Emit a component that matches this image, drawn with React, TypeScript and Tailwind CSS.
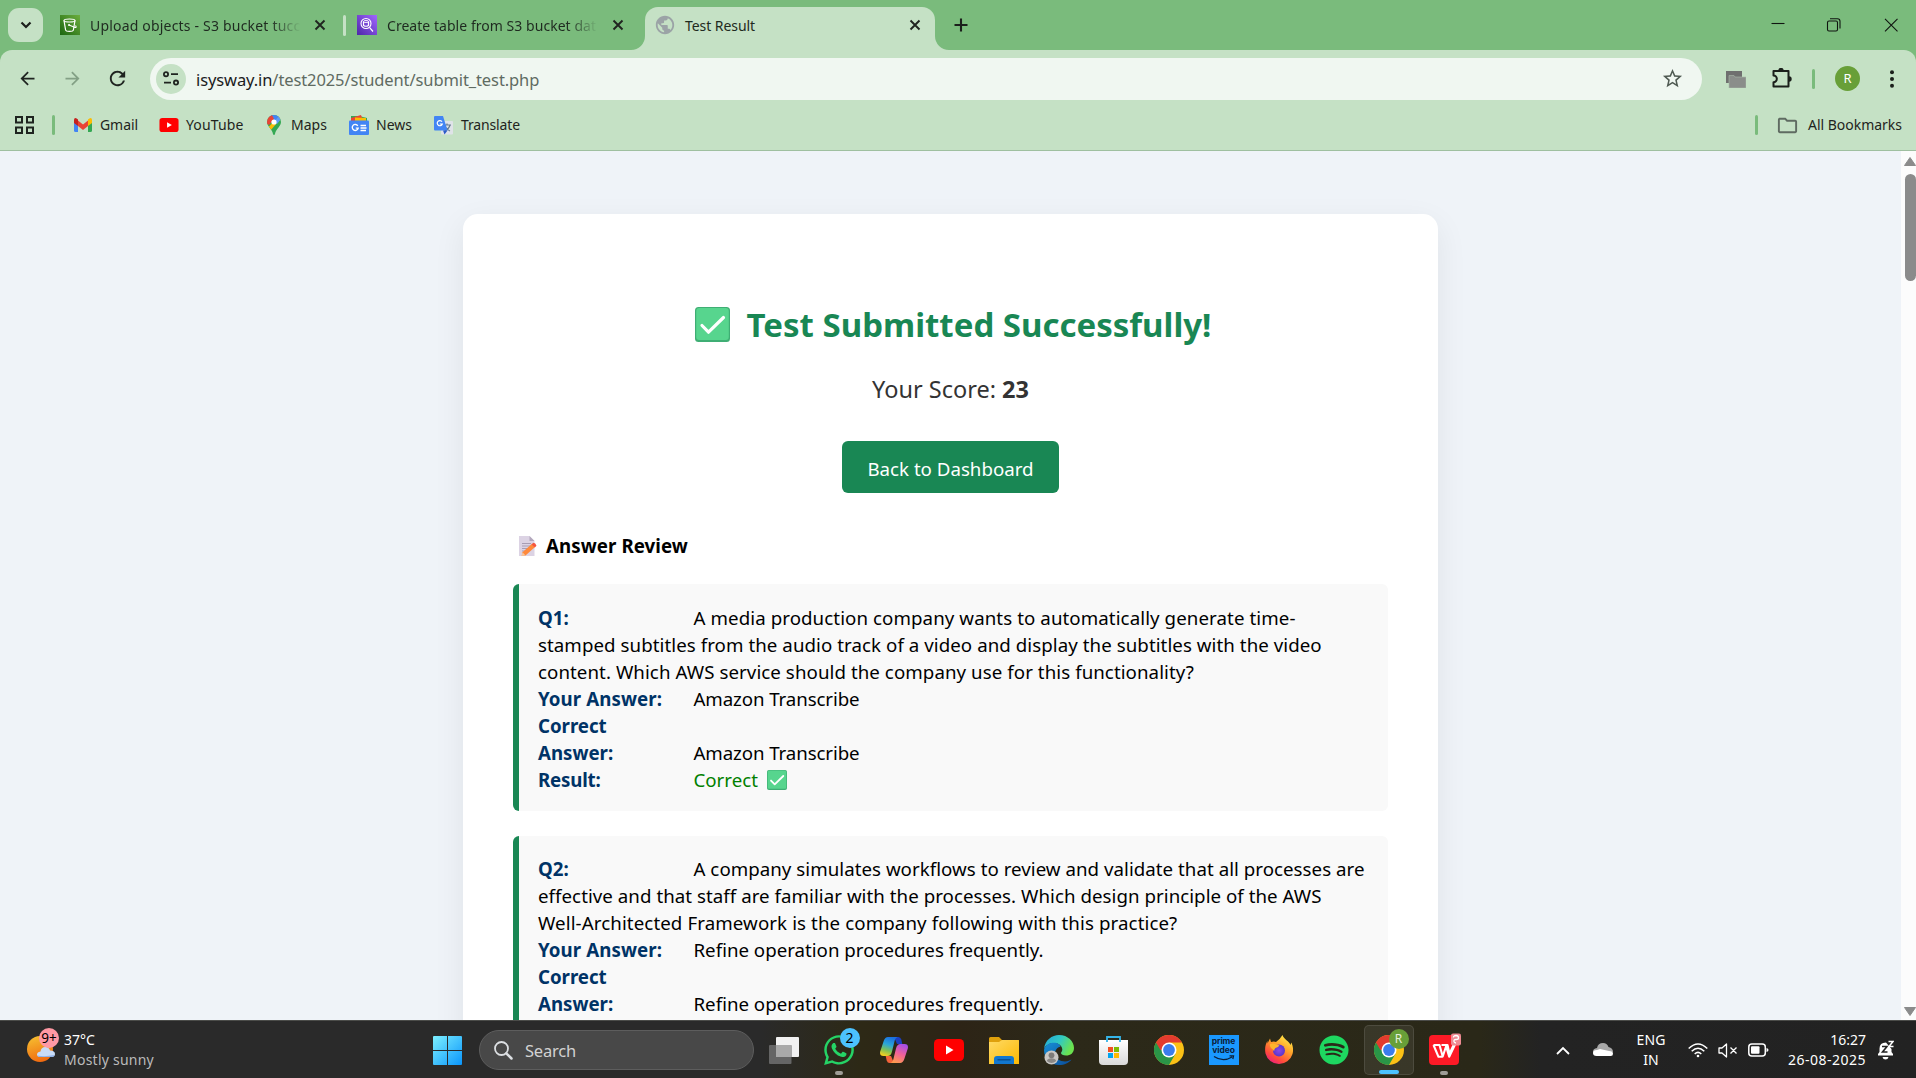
import type { ReactNode } from "react";
import { FaSpotify, FaWhatsapp } from "react-icons/fa";
import { MdArrowBack, MdArrowForward, MdOutlineFolder, MdPublic, MdRefresh, MdStarBorder } from "react-icons/md";

type Line = { text: string; spacing: string };
type Question = { id: string; pad: string; first: Line; rest: Line[]; answer: Line };

const questions: Question[] = [
  {
    id: "Q1:",
    pad: "pt-[20px]",
    first: { text: "A media production company wants to automatically generate time-", spacing: "tracking-[0.085px]" },
    rest: [
      { text: "stamped subtitles from the audio track of a video and display the subtitles with the video", spacing: "tracking-[0.064px]" },
      { text: "content. Which AWS service should the company use for this functionality?", spacing: "tracking-[0.07px]" },
    ],
    answer: { text: "Amazon Transcribe", spacing: "tracking-[-0.1px]" },
  },
  {
    id: "Q2:",
    pad: "pt-[19px]",
    first: { text: "A company simulates workflows to review and validate that all processes are", spacing: "tracking-[0.037px]" },
    rest: [
      { text: "effective and that staff are familiar with the processes. Which design principle of the AWS", spacing: "tracking-[0.045px]" },
      { text: "Well-Architected Framework is the company following with this practice?", spacing: "tracking-[0.1px]" },
    ],
    answer: { text: "Refine operation procedures frequently.", spacing: "" },
  },
];

function CheckEmoji({ className }: { className: string }) {
  return (
    <svg viewBox="0 0 35 35" className={className}>
      <rect x="0" y="0" width="35" height="35" rx="3.5" fill="#3fae74" />
      <rect x="1.2" y="1" width="32.6" height="32" rx="3" fill="#57d58e" />
      <path d="M7 18.5 13.5 25.2 28.5 10.5" fill="none" stroke="#fff" strokeWidth="3.2" strokeLinecap="round" strokeLinejoin="round" />
    </svg>
  );
}

function MemoEmoji() {
  return (
    <svg viewBox="0 0 18 20" className="h-5 w-[18px] shrink-0">
      <path d="M0 0h10.500l5 5v15H0z" fill="#dcd3e4" />
      <path d="M10.500 0l5 5h-5z" fill="#b3a8bd" />
      <path d="M3 7.500h9M3 10h9M3 12.500h6M3 15h4" stroke="#a89db4" strokeWidth="1" />
      <path d="M3.500 16.200 13 7.800l3 3.200-9.500 8.500-3.800.5z" fill="#ff8a3c" />
      <path d="M12.500 8.300 14.500 6.800q2 .2 3 3L15.800 11.500z" fill="#f5553f" />
      <path d="M3.500 16.200 6.500 19.500 2.700 20z" fill="#f7c9a0" />
    </svg>
  );
}

function CloseIcon() {
  return (
    <svg viewBox="0 0 12 12" className="size-3 shrink-0">
      <path d="M1.500 1.500l9 9M10.500 1.500l-9 9" stroke="#202420" strokeWidth="1.9" />
    </svg>
  );
}

function S3Icon() {
  return (
    <svg viewBox="0 0 20 20" className="size-5 shrink-0">
      <defs><linearGradient id="s3" x1="0" y1="1" x2="1" y2="0"><stop stopColor="#1b660f" /><stop offset="1" stopColor="#6cae3e" /></linearGradient></defs>
      <rect width="20" height="20" fill="url(#s3)" />
      <path d="M4 5.500 5.600 15c.3 1.800 7.500 1.800 7.800 0L15 5.500" fill="none" stroke="#fff" strokeWidth="1.200" />
      <ellipse cx="9.500" cy="5.500" rx="5.500" ry="1.500" fill="none" stroke="#fff" strokeWidth="1.200" />
      <path d="M9 10l6 2.500q2 0 .5-2" fill="none" stroke="#fff" strokeWidth="1.100" />
      <circle cx="9" cy="10" r="1" fill="#fff" />
    </svg>
  );
}

function AthenaIcon() {
  return (
    <svg viewBox="0 0 20 20" className="size-5 shrink-0">
      <defs><linearGradient id="athena" x1="0" y1="1" x2="1" y2="0"><stop stopColor="#4d27a8" /><stop offset="1" stopColor="#a166ff" /></linearGradient></defs>
      <rect width="20" height="20" fill="url(#athena)" />
      <circle cx="9" cy="8.500" r="5" fill="none" stroke="#fff" strokeWidth="1.100" />
      <ellipse cx="9" cy="6.500" rx="2.500" ry="1" fill="none" stroke="#fff" strokeWidth=".9" />
      <path d="M6.500 6.500v4q2.500 1.500 5 0v-4M12.500 12.300l3.500 4.200" fill="none" stroke="#fff" strokeWidth="1.200" />
    </svg>
  );
}

function TabStrip() {
  return (
    <div className="flex h-[50px] items-center pl-2 text-[14px] leading-5 text-[#1f2a20]">
      <div className="flex h-[34px] w-[35px] items-center justify-center rounded-[11px] bg-[#c5e1c5]">
        <svg viewBox="0 0 12 8" className="h-[8px] w-[12px]"><path d="M1.500 1.500 6 6l4.500-4.500" fill="none" stroke="#1b1f1b" strokeWidth="2.200" /></svg>
      </div>
      <div className="ml-[17px] flex w-[283px] items-center">
        <S3Icon />
        <div className="ml-[10px] w-[211px] overflow-hidden pt-px whitespace-nowrap tracking-[0.19px] [mask-image:linear-gradient(to_right,black_85%,transparent)]">Upload objects - S3 bucket tucc</div>
        <div className="ml-[13px]"><CloseIcon /></div>
      </div>
      <div className="h-[21px] w-[3px] rounded-full bg-[#c5e1c5]" />
      <div className="ml-[11px] flex w-[288px] items-center">
        <AthenaIcon />
        <div className="ml-[10px] w-[211px] overflow-hidden pt-px whitespace-nowrap tracking-[0.04px] [mask-image:linear-gradient(to_right,black_85%,transparent)]">Create table from S3 bucket dat</div>
        <div className="ml-[14px]"><CloseIcon /></div>
      </div>
      <div className="relative mt-[7px] flex h-[43px] w-[290px] items-center rounded-t-[13px] bg-[#c5e1c5] pb-[7px] pl-[11px]">
        <svg viewBox="0 0 14 14" className="absolute bottom-0 -left-[14px] size-[14px]"><path d="M14 0v14H0A14 14 0 0 0 14 0z" fill="#c5e1c5" /></svg>
        <svg viewBox="0 0 14 14" className="absolute -right-[14px] bottom-0 size-[14px]"><path d="M0 0v14h14A14 14 0 0 1 0 0z" fill="#c5e1c5" /></svg>
        <MdPublic className="-ml-0.5 size-[22px] text-[#9ba3a6]" />
        <div className="ml-[9px] w-[224px] pt-px tracking-[-0.066px]">Test Result</div>
        <CloseIcon />
      </div>
      <svg viewBox="0 0 14 14" className="ml-[19px] size-[14px]"><path d="M7 .5v13M.5 7h13" stroke="#1b1f1b" strokeWidth="2.100" /></svg>
      <svg viewBox="0 0 128 14" className="mr-[17px] ml-auto h-[14px] w-[128px]">
        <g fill="none" stroke="#101510" strokeWidth="1.100">
          <path d="M.5 5.500h13" />
          <rect x="56.500" y="3" width="10" height="10" rx="1.500" />
          <path d="M59 .8h7.500q2.500 0 2.500 2.500V10.500" />
          <path d="M114 .8l12.500 12.500M126.500.8 114 13.300" />
        </g>
      </svg>
    </div>
  );
}

function Toolbar() {
  return (
    <div className="flex h-[50px] items-center rounded-t-[12px] bg-[#c5e1c5] pt-[7px] pl-[17px] text-[#1f2420]">
      <MdArrowBack className="size-[21px]" />
      <MdArrowForward className="ml-[24px] size-[21px] text-[#83a085]" />
      <MdRefresh className="ml-[23px] size-[23px]" />
      <div className="ml-[21px] flex h-[42px] w-[1552px] items-center rounded-full bg-[#f0f7f1] pl-[6px]">
        <div className="flex size-[30px] items-center justify-center rounded-full bg-[#c5e1c5]">
          <svg viewBox="0 0 16 15" className="h-[15px] w-4" fill="none" stroke="#1f2420" strokeWidth="1.800">
            <circle cx="3" cy="3.200" r="2.100" /><path d="M8 3.200h7M1 11.600h7" /><circle cx="13" cy="11.600" r="2.100" />
          </svg>
        </div>
        <div className="ml-[10px] pt-0.5 text-[16.500px] leading-6 tracking-[-0.1px] text-[#5f6b62]"><span className="text-[#1b201c]">isysway.in</span>/test2025/student/submit_test.php</div>
        <MdStarBorder className="mr-[18px] ml-auto size-[23px] text-[#4f5a52]" />
      </div>
      <svg viewBox="0 0 20 17" className="mt-0.5 ml-6 h-[17px] w-5 shrink-0">
        <path d="M0 0h16v12H0z" fill="#6f6f6f" /><path d="M3 4.500h5l1 1.500h11v11H3z" fill="#8a8d8a" stroke="#a9b8a9" strokeWidth=".6" />
      </svg>
      <svg viewBox="0 0 20 20" className="-mt-0.5 ml-[26px] size-5 shrink-0">
        <path d="M1.500 3H16.500V18.500H1.500V14.200A3.300 3.300 0 0 0 1.500 7.500z" fill="none" stroke="#1b1f1b" strokeWidth="2" strokeLinejoin="round" />
        <path d="M6.300 2.500a2.700 2.700 0 0 1 5.400 0zM17 8.300a2.700 2.700 0 0 1 0 5.400z" fill="#1b1f1b" />
      </svg>
      <div className="ml-[20px] h-5 w-[3px] rounded-full bg-[#7abb7c]" />
      <div className="ml-[20px] flex size-[25px] items-center justify-center rounded-full bg-[#689f38] text-[13px] text-white">R</div>
      <svg viewBox="0 0 4 18" className="ml-[30px] h-[18px] w-1" fill="#1b1f1b"><circle cx="2" cy="2.300" r="2" /><circle cx="2" cy="9" r="2" /><circle cx="2" cy="15.700" r="2" /></svg>
    </div>
  );
}

function YouTubeIcon({ className }: { className: string }) {
  return (
    <svg viewBox="0 0 30 22" className={className}>
      <rect width="30" height="22" rx="4.500" fill="#f00" /><path d="M12 6.500v9l7.500-4.500z" fill="#fff" />
    </svg>
  );
}

function BookmarksBar() {
  return (
    <div className="flex h-[51px] items-center border-b border-[#9fbfa0] bg-[#c5e1c5] pr-[14px] pl-[15px] text-[14px] leading-5 text-[#1f2420]">
      <svg viewBox="0 0 19 18" className="h-[18px] w-[19px]" fill="none" stroke="#1f2420" strokeWidth="2">
        <rect x="1" y="1" width="6" height="5.500" /><rect x="12" y="1" width="6" height="5.500" /><rect x="1" y="11.500" width="6" height="5.500" /><rect x="12" y="11.500" width="6" height="5.500" />
      </svg>
      <div className="ml-[18px] h-5 w-[3px] rounded-full bg-[#7abb7c]" />
      <svg viewBox="0 0 18 14" className="ml-[19px] h-[14px] w-[18px]">
        <path d="M0 2v10.500q0 1.500 1.500 1.500H4V5z" fill="#4285f4" /><path d="M18 2v10.500q0 1.500-1.500 1.500H14V5z" fill="#34a853" />
        <path d="M4 2.500 9 6.500l5-4V8l-5 4-5-4z" fill="#ea4335" /><path d="M0 2Q0 .2 1.500 0 2.500 0 4 1.500V8L0 5z" fill="#c5221f" /><path d="M18 2q0-1.800-1.500-2-1 0-2.500 1.500V8l4-3z" fill="#fbbc04" />
      </svg>
      <div className="ml-[8px] w-[59px] tracking-[-0.072px]">Gmail</div>
      <YouTubeIcon className="h-[14px] w-5" />
      <div className="ml-[7px] w-[81px] tracking-[0.15px]">YouTube</div>
      <svg viewBox="0 0 14 20" className="h-5 w-[14px]">
        <clipPath id="pin"><path d="M7 0a7 7 0 0 1 7 7c0 4.500-5 6.500-6 12q-.3 1-1 1t-1-1C5 13.500 0 11.500 0 7a7 7 0 0 1 7-7z" /></clipPath>
        <g clipPath="url(#pin)"><rect width="14" height="20" fill="#34a853" /><path d="M0 14 12 0l2 3.500L3 16z" fill="#fbbc04" /><path d="M7 7 14 0H3L0 8z" fill="#4285f4" /><path d="M0 0h5L7 4 2 10 0 9z" fill="#ea4335" /><path d="M7 7 12 1l2 3-4 5z" fill="#5a9bf8" /></g>
        <circle cx="7" cy="7" r="2.600" fill="#fff" />
      </svg>
      <div className="ml-[10px] w-[58px]">Maps</div>
      <svg viewBox="0 0 20 20" className="size-5">
        <path d="M2 1h8l8 2v5H2z" fill="#34a853" /><path d="M2 3 12 0l2 6H2z" fill="#ea4335" /><path d="M6 2.500 17 3v5H6z" fill="#fbbc04" /><rect y="5.500" width="20" height="14.500" rx="1" fill="#4285f4" />
        <path d="M8.800 10.800a3 3 0 1 0 .4 2.300H6.800M11.500 10.500h5.500M11.500 13h6M11.500 15.500h5.500" fill="none" stroke="#fff" strokeWidth="1.400" />
      </svg>
      <div className="ml-[7px] w-[58px]">News</div>
      <svg viewBox="0 0 19 19" className="size-[19px]">
        <rect x="7" y="5" width="12" height="13.500" rx="1" fill="#dfe3e8" /><path d="M9.500 9h7.500M13 7.500V9M16 9q-1 4-5.500 6M10.800 10q1.500 3.500 5.200 5" fill="none" stroke="#667c92" strokeWidth="1.200" />
        <path d="M1 0h8l4.500 14.500H1q-1 0-1-1V1q0-1 1-1z" fill="#4285f4" /><path d="M9 14.500h4.500L10.500 18.500z" fill="#2d5bc9" />
        <path d="M8 5.700A2.600 2.600 0 1 0 8.300 8H5.800" fill="none" stroke="#fff" strokeWidth="1.200" />
      </svg>
      <div className="ml-[8px] tracking-[-0.135px]">Translate</div>
      <div className="ml-auto h-5 w-[3px] rounded-full bg-[#7abb7c]" />
      <MdOutlineFolder className="mr-[9px] ml-[18px] size-[23px] text-[#5f6b62]" />
      <div className="tracking-[-0.018px]">All Bookmarks</div>
    </div>
  );
}

function QuestionCard({ q }: { q: Question }) {
  const label = "inline-block w-[155.5px] font-bold text-[#003366]";
  return (
    <div className={`mb-[25px] h-[227px] rounded-[6px] border-l-[6px] border-[#198754] bg-[#f9f9f9] pl-[19px] text-[18.700px] leading-[27px] whitespace-nowrap text-black ${q.pad}`}>
      <div><span className={label}>{q.id}</span><span className={q.first.spacing}>{q.first.text}</span></div>
      {q.rest.map((l) => <div key={l.text} className={l.spacing}>{l.text}</div>)}
      <div><span className={`${label} tracking-[0.08px]`}>Your Answer:</span><span className={q.answer.spacing}>{q.answer.text}</span></div>
      <div><span className={label}><span className="tracking-[-0.05px]">Correct</span><br />Answer:</span><span className={q.answer.spacing}>{q.answer.text}</span></div>
      <div className="flex items-center"><span className={`${label} tracking-[-0.2px]`}>Result:</span><span className="text-[#008000]">Correct</span><CheckEmoji className="ml-[9px] size-5" /></div>
    </div>
  );
}

function Page() {
  return (
    <div className="flex h-[869px] overflow-hidden bg-[#eff3f8]">
      <div className="flex flex-1 justify-center overflow-hidden pt-[63px]">
        <div className="h-[1200px] w-[975px] rounded-[15px] bg-white px-[50px] pt-[87px] shadow-[0_10px_32px_rgba(0,0,0,0.07)]">
          <h1 className="flex items-center justify-center pl-[5px] text-[33px] leading-[47px] font-bold text-[#198754]">
            <CheckEmoji className="mr-[17px] size-[35px]" />Test Submitted Successfully!
          </h1>
          <p className="mt-[25px] text-center text-[23.500px] leading-[33px] text-[#333]">Your Score: <b>23</b></p>
          <div className="mx-auto mt-[35px] flex h-[52px] w-[217px] items-center justify-center rounded-[6px] bg-[#198754] pt-[3px] text-[18.700px] leading-[27px] text-white">Back to Dashboard</div>
          <h3 className="mt-[39px] mb-[25px] flex items-center gap-[9px] pl-[6px] text-[18.700px] leading-[27px] font-bold tracking-[0.08px] text-black"><MemoEmoji />Answer Review</h3>
          {questions.map((q) => <QuestionCard key={q.id} q={q} />)}
        </div>
      </div>
      <div className="flex w-[15px] flex-col items-end bg-[#fcfcfc] pt-[6px] pb-[4px]">
        <svg viewBox="0 0 12 9" className="h-[9px] w-3"><path d="M6 .5 11.500 8.500H.5z" fill="#8b8b8b" stroke="#8b8b8b" strokeLinejoin="round" /></svg>
        <div className="mt-2 h-[107px] w-[11px] rounded-full bg-[#8b8b8b]" />
        <svg viewBox="0 0 12 9" className="mt-auto h-[9px] w-3"><path d="M6 8.500 11.500.5H.5z" fill="#8b8b8b" stroke="#8b8b8b" strokeLinejoin="round" /></svg>
      </div>
    </div>
  );
}

function ChromeIcon() {
  return (
    <svg viewBox="0 0 30 30" className="size-[30px]">
      <circle cx="15" cy="15" r="15" fill="#fbc116" />
      <path d="M2 7.500A15 15 0 0 0 15 30L21.500 18.700 15 15z" fill="#2a9547" />
      <path d="M2 7.500A15 15 0 0 1 28 7.500H15v7.500H6.400z" fill="#e33b2e" />
      <circle cx="15" cy="15" r="7.500" fill="#fff" /><circle cx="15" cy="15" r="5.900" fill="#3b7ded" />
    </svg>
  );
}

function EdgeIcon() {
  return (
    <svg viewBox="0 0 30 30" className="size-[30px]">
      <defs>
        <linearGradient id="edgeTop" x1="0" y1="0" x2="1" y2=".4"><stop stopColor="#23a7dc" /><stop offset=".55" stopColor="#31c9c3" /><stop offset="1" stopColor="#6be24f" /></linearGradient>
        <linearGradient id="edgeLow" x1="0" y1="0" x2="1" y2="1"><stop stopColor="#178fd6" /><stop offset="1" stopColor="#0b4d9b" /></linearGradient>
      </defs>
      <path d="M0 14C1 5 8 0 15 0c9 0 15 6.500 15 13 0 5-3.500 7.500-8 7.500-3 0-5-1-5-2.500 0-.8 1.300-1.500 1.300-3.500C18.300 11 15 8 10 8 5 8 1 11 0 14z" fill="url(#edgeTop)" />
      <path d="M0 15C1 10.500 5 7.800 10 7.800c4 0 6 2 6.500 4C13 12 11 16 11 18.500c0 5 5 8 10 8 3 0 5-1.500 6.500-2C25 28 20.500 30 15 30 7 30 0 24 0 15z" fill="url(#edgeLow)" />
      <circle cx="7.500" cy="22.500" r="7" fill="#c9c7c5" /><circle cx="7.500" cy="20.300" r="2.900" fill="#7d7b79" /><path d="M2.800 26a4.800 3.500 0 0 1 9.400 0q-4.700 4-9.400 0z" fill="#8a8886" />
    </svg>
  );
}

function CopilotIcon() {
  return (
    <svg viewBox="0 0 28 26" className="h-[26px] w-7">
      <defs>
        <linearGradient id="cpA" x1=".6" y1="0" x2=".3" y2="1"><stop stopColor="#1a6fe0" /><stop offset=".4" stopColor="#2aa6d8" /><stop offset=".7" stopColor="#7cc158" /><stop offset="1" stopColor="#f5d020" /></linearGradient>
        <linearGradient id="cpB" x1=".7" y1="0" x2=".3" y2="1"><stop stopColor="#a54ee8" /><stop offset=".5" stopColor="#f0619a" /><stop offset="1" stopColor="#ff9a4d" /></linearGradient>
      </defs>
      <path d="M14 0h4.500q2 0 2.800 2.500L22.300 7H17z" fill="#1b3fc0" />
      <path d="M8 0h9.500q-2 .5-2.800 3.500L12 14.500q-1 4.500-4.500 4.500H3.500Q-.8 19 .2 14.500L3.700 4Q5 0 8 0z" fill="url(#cpA)" />
      <path d="M14 26H9.500q-2 0-2.800-2.500L5.700 19H11z" fill="#f4633a" />
      <path d="M20 26h-9.500q2-.5 2.800-3.500L16 11.500Q17 7 20.500 7h4q4.300 0 3.300 4.500L24.300 22Q23 26 20 26z" fill="url(#cpB)" />
    </svg>
  );
}

function FirefoxIcon() {
  return (
    <svg viewBox="0 0 28 30" className="h-[30px] w-7">
      <defs>
        <linearGradient id="ffA" x1=".8" y1="0" x2=".2" y2="1"><stop stopColor="#fff04a" /><stop offset=".4" stopColor="#ffa22a" /><stop offset=".75" stopColor="#ff4a3c" /><stop offset="1" stopColor="#e8178a" /></linearGradient>
        <radialGradient id="ffB"><stop stopColor="#8b4ae8" /><stop offset="1" stopColor="#5a35c8" /></radialGradient>
      </defs>
      <path d="M17.500 0c1 4 7 6.500 8 10l.8-2.500C28.500 12 28.300 16 27.500 19A14 14 0 0 1 .5 18.500C-.5 13 .5 9 2.500 6v2.500L5 3.500 6 7q3-.8 5 0Q14.500 5 17.500 0z" fill="url(#ffA)" />
      <circle cx="14" cy="15.500" r="6" fill="url(#ffB)" />
      <path d="M5 9q4-1.500 7 1l2.500.3Q13.500 12.500 10.500 13q-1.300 1.200-1.300 3-1.200-.5-1.500-1.800Q4 12 5 9z" fill="#ffb52b" />
    </svg>
  );
}

function WpsIcon() {
  return (
    <svg viewBox="0 0 30 30" className="size-[30px] overflow-visible">
      <rect width="30" height="30" rx="4" fill="#fd1a26" />
      <path d="M4.500 10h6l3.200 11.500L17.200 11M4.500 10l5 11.800h4.200M12.500 10h6l2 9L24.800 9.500M17 11l3.200 10.800L26 9.500" fill="none" stroke="#fff" strokeWidth="2.100" strokeLinejoin="round" />
      <rect x="22" y="-1.500" width="10" height="12" rx="2" fill="#ee8a92" />
      <path d="M24.500 2.500q0-2 2.500-2 2.500.2 2.500 2.200T27 4.500t-2 2.200q.3 1.300 2 1.300" fill="none" stroke="#fff" strokeWidth="1.300" />
    </svg>
  );
}

function Slot({ children, mark, active }: { children: ReactNode; mark?: string; active?: boolean }) {
  return (
    <div className="flex h-[57px] w-[55px] items-center justify-center pt-px">
      <div className={active ? "relative flex h-[50px] w-[50px] items-center justify-center rounded-[5px] border border-white/10 bg-white/[0.07]" : "relative flex h-[50px] w-[50px] items-center justify-center"}>
        {children}
        {mark && <div className={`absolute bottom-0 h-1 rounded-full ${mark}`} />}
      </div>
    </div>
  );
}

function Taskbar() {
  return (
    <div className="flex h-[58px] items-center border-t border-[#4b4c49] bg-[linear-gradient(to_right,#2a2a2a_0,#2a2a2a_760px,#2d2916_860px,#2d2416_960px,#2c2919_1060px,#2a2818_1480px,#232323_1540px,#222222_100%)] text-[14px] leading-5 text-white">
      <div className="relative ml-[27px] h-[57px] w-[28px]">
        <svg viewBox="0 0 30 57" className="h-[57px] w-[30px]">
          <defs><linearGradient id="sun" x1=".2" y1="0" x2=".5" y2="1"><stop stopColor="#f6bf30" /><stop offset="1" stopColor="#f06a10" /></linearGradient></defs>
          <circle cx="13" cy="28" r="13" fill="url(#sun)" />
          <path d="M13.500 36q-3.500 0-3.500-2.500t3.500-3q.5-4.500 5-4.500 3.500 0 4.500 3.500 5 0 5 3.500 0 3-3.500 3z" fill="#c9dcf7" />
          <path d="M10.500 34.500q7 1.500 17-.5-.5 2-3 2h-11q-2.500 0-3-1.500z" fill="#8fb1e8" />
        </svg>
        <div className="absolute top-[7px] left-[12px] flex size-5 items-center justify-center rounded-full bg-[#ff99a4] text-[13.500px] text-black">9+</div>
      </div>
      <div className="ml-[9px] w-[369px]">
        <div>37°C</div>
        <div className="tracking-[0.24px] text-[#bababa]">Mostly sunny</div>
      </div>
      <svg viewBox="0 0 29 29" className="mt-0.5 size-[29px]">
        <defs><linearGradient id="win" x1="0" y1="0" x2="1" y2="1"><stop stopColor="#7df0ff" /><stop offset="1" stopColor="#0a95fb" /></linearGradient></defs>
        <path d="M1 0h13v14H0V1q0-1 1-1zM15 0h13q1 0 1 1v13H15zM0 15h14v14H1q-1 0-1-1zM15 15h14v13q0 1-1 1H15z" fill="url(#win)" />
      </svg>
      <div className="mt-px ml-[17px] flex h-10 w-[275px] items-center rounded-full border border-[#5d5d5d] bg-[#484848] pl-[14px] text-[16.500px] text-[#d2d2d2]">
        <svg viewBox="0 0 19 19" className="size-[19px]" fill="none" stroke="#dcdfe2"><circle cx="7.500" cy="7.500" r="6.500" strokeWidth="1.800" /><path d="M12.300 12.300l5.200 5.200" strokeWidth="2.500" strokeLinecap="round" /></svg>
        <div className="ml-[12px] pt-px tracking-[-0.2px]">Search</div>
      </div>
      <div className="ml-[2px] flex">
        <Slot>
          <svg viewBox="0 0 30 27" className="h-[27px] w-[30px]"><rect x="7" width="23" height="20" rx="1" fill="#f1f1f1" /><rect y="8" width="22.500" height="19" rx="1" fill="#656565" /><path d="M7 8h15.500v12H7z" fill="#a9a9a9" /></svg>
        </Slot>
        <Slot mark="w-2 bg-[#a09d97]">
          <FaWhatsapp className="size-[34px] shrink-0 text-[#25d366]" />
          <div className="absolute top-[3px] left-[26px] flex size-5 items-center justify-center rounded-full bg-[#4cc2ff] text-black">2</div>
        </Slot>
        <Slot><CopilotIcon /></Slot>
        <Slot><YouTubeIcon className="h-[22px] w-[30px]" /></Slot>
        <Slot>
          <svg viewBox="0 0 30 27" className="h-[27px] w-[30px]">
            <defs><linearGradient id="fold" x1="0" y1="0" x2="1" y2="1"><stop stopColor="#ffda66" /><stop offset="1" stopColor="#fcb902" /></linearGradient></defs>
            <path d="M0 1.500Q0 0 1.500 0H10l3 3H30v5H0z" fill="#dfa00c" /><path d="M0 5h10l3-2h16q1 0 1 1v23H0z" fill="url(#fold)" /><path d="M5 27v-5q0-3 3-3h14q3 0 3 3v5z" fill="#1277cf" /><path d="M8.500 22.800h13" stroke="#0b4a8a" strokeWidth="1.300" />
          </svg>
        </Slot>
        <Slot><EdgeIcon /></Slot>
        <Slot>
          <svg viewBox="0 0 29 29" className="size-[29px]">
            <defs><linearGradient id="store" x1="0" y1="0" x2="0" y2="1"><stop stopColor="#fff" /><stop offset="1" stopColor="#d9d9d9" /></linearGradient></defs>
            <path d="M0 4h29v21q0 4-4 4H4q-4 0-4-4z" fill="url(#store)" /><path d="M8 6V1h13v5" fill="none" stroke="#35b5e9" strokeWidth="1.800" />
            <path d="M9 11h5v5H9z" fill="#f25022" /><path d="M15 11h5v5h-5z" fill="#7fba00" /><path d="M9 17h5v5H9z" fill="#00a4ef" /><path d="M15 17h5v5h-5z" fill="#ffb900" />
          </svg>
        </Slot>
        <Slot><ChromeIcon /></Slot>
        <Slot>
          <div className="flex size-[30px] flex-col items-center bg-[#1a98ff] pt-[2px] font-['Inter'] text-[8.500px] leading-[9px] font-bold tracking-[-0.1px] text-[#0c2038]">
            <span>prime</span><span>video</span>
            <svg viewBox="0 0 22 7" className="h-[7px] w-[22px]"><path d="M1 1.500q9 6 18 .5M16.500.8h4L19.800 4" fill="none" stroke="#0c2038" strokeWidth="1.300" /></svg>
          </div>
        </Slot>
        <Slot><FirefoxIcon /></Slot>
        <Slot><FaSpotify className="size-[30px] text-[#1ed760]" /></Slot>
        <Slot active mark="w-5 bg-[#4cc2ff]">
          <ChromeIcon />
          <div className="absolute top-[3px] left-[24px] flex size-5 items-center justify-center rounded-full bg-[#689f38] text-[12px] text-[#e4eedb]">R</div>
        </Slot>
        <Slot mark="w-2 bg-[#a09d97]"><WpsIcon /></Slot>
      </div>
      <svg viewBox="0 0 14 9" className="mt-0.5 ml-[85px] h-[9px] w-[14px]"><path d="M1 8 7 2l6 6" fill="none" stroke="#fff" strokeWidth="1.800" /></svg>
      <svg viewBox="0 0 20 13" className="ml-[23px] h-[13px] w-5"><path d="M3.500 12Q0 11.500 0 8.500T4 5q1-5 6-5 4 0 5.500 4Q20 5 20 9l-6 3z" fill="#a8a8a8" /><path d="M3.500 13Q0 13 0 10t4-3l3-1 9 2q4 .2 4 2.700T17 13z" fill="#fff" /></svg>
      <div className="mt-px ml-[22px] w-[32px] text-center"><div className="tracking-[0.12px]">ENG</div><div>IN</div></div>
      <svg viewBox="0 0 20 15" className="mt-px ml-[21px] h-[15px] w-5" fill="none" stroke="#fff" strokeWidth="1.500"><path d="M.7 5.500q9.300-9 18.600 0M3.700 8.300q6.300-6.200 12.600 0M6.700 11q3.300-3.200 6.600 0" /><circle cx="10" cy="13" r="1.300" fill="#fff" stroke="none" /></svg>
      <svg viewBox="0 0 20 15" className="mt-px ml-[10px] h-[15px] w-5" fill="none" stroke="#fff" strokeWidth="1.300"><path d="M1 5h3l4.500-4v13L4 10H1zM12.500 4.500l6 6M18.500 4.500l-6 6" strokeLinejoin="round" /></svg>
      <svg viewBox="0 0 21 14" className="mt-px ml-[10px] h-[14px] w-[21px]"><rect x=".8" y="1" width="16.500" height="12" rx="3" fill="none" stroke="#fff" strokeWidth="1.500" /><rect x="3" y="3.300" width="8.500" height="7.400" rx="1" fill="#fff" /><path d="M18.500 5q2 .3 2 2t-2 2z" fill="#fff" /></svg>
      <div className="ml-auto text-right"><div>16:27</div><div className="tracking-[0.49px]">26-08-2025</div></div>
      <svg viewBox="0 0 17 20" className="mt-px mr-[22px] ml-[11px] h-5 w-[17px]">
        <path d="M1 15.500h15v-1.500l-1.500-2V9L9 2.500q-6.500 0-6.500 6V12L1 14zM5.500 17h6q-.5 2.500-3 2.500t-3-2.500z" fill="#fff" />
        <path d="M5 6.500h5l-4.500 5.500H10.500" fill="none" stroke="#222" strokeWidth="1.600" /><path d="M11.500 1.500h4.500L12 6.500h4.500" fill="none" stroke="#fff" strokeWidth="1.500" />
      </svg>
    </div>
  );
}

export default function App() {
  return (
    <div className="h-[1078px] w-[1916px] overflow-hidden bg-[#7abb7c] font-['Noto_Sans','Open_Sans',sans-serif]">
      <TabStrip />
      <Toolbar />
      <BookmarksBar />
      <Page />
      <Taskbar />
    </div>
  );
}
